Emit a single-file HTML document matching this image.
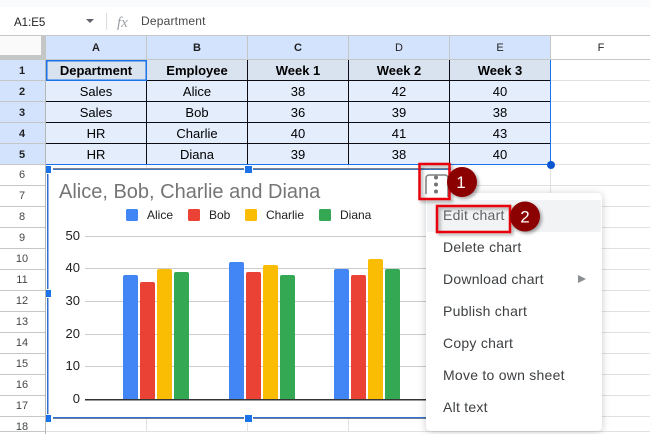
<!DOCTYPE html>
<html><head><meta charset="utf-8"><style>
html,body{margin:0;padding:0;background:#fff;width:650px;height:434px;overflow:hidden}
svg{display:block;font-family:"Liberation Sans",sans-serif}
</style></head><body>
<svg width="650" height="434" viewBox="0 0 650 434" xmlns="http://www.w3.org/2000/svg">
<defs>
<filter id="s" x="-20%" y="-20%" width="140%" height="140%"><feDropShadow dx="0" dy="1" stdDeviation="4" flood-color="#000" flood-opacity=".22"/></filter>
<filter id="r" x="-20%" y="-20%" width="150%" height="150%"><feDropShadow dx="2" dy="2" stdDeviation="1.5" flood-color="#000" flood-opacity=".35"/></filter>
</defs>
<rect width="650" height="7" fill="#f9fbfd"/>
<text x="14" y="26" font-size="11.5" fill="#202124">A1:E5</text>
<path d="M86 19h8l-4 4z" fill="#5f6368"/>
<rect x="106" y="13" width="1" height="17" fill="#dadce0"/>
<text x="117" y="27" font-size="15" font-style="italic" fill="#9aa0a6" font-family="Liberation Serif">fx</text>
<text x="141" y="25" font-size="12" fill="#444746" letter-spacing=".2">Department</text>

<!-- header backgrounds -->
<rect x="0" y="35" width="650" height="1" fill="#c4c7c5"/>
<rect x="0" y="36" width="46" height="24" fill="#c4c7c5"/>
<rect x="0" y="36" width="41" height="19" fill="#fafafa"/>
<rect x="46" y="36" width="504" height="23" fill="#d3e3fd"/>
<rect x="0" y="60" width="45" height="105" fill="#d3e3fd"/>
<rect x="0" y="59" width="650" height="1" fill="#c4c7c5"/>
<rect x="45" y="60" width="1" height="374" fill="#b4b7b5"/>
<g fill="#c4c7c5"><rect x="146" y="36" width="1" height="23"/><rect x="247" y="36" width="1" height="23"/><rect x="348" y="36" width="1" height="23"/><rect x="449" y="36" width="1" height="23"/><rect x="550" y="36" width="1" height="23"/></g>
<g font-size="11" fill="#1f1f1f" text-anchor="middle">
<g font-weight="bold"><text x="96" y="51">A</text><text x="197" y="51">B</text><text x="298" y="51">C</text></g>
<text x="399" y="51">D</text><text x="500" y="51">E</text><text x="601" y="51">F</text>
</g>
<!-- row lines -->
<g fill="#e1e1e1">
<rect x="551" y="80" width="99" height="1"/><rect x="551" y="101" width="99" height="1"/><rect x="551" y="122" width="99" height="1"/><rect x="551" y="143" width="99" height="1"/><rect x="551" y="164" width="99" height="1"/>
<rect x="46" y="185" width="604" height="1"/><rect x="46" y="206" width="604" height="1"/><rect x="46" y="227" width="604" height="1"/><rect x="46" y="248" width="604" height="1"/><rect x="46" y="269" width="604" height="1"/><rect x="46" y="290" width="604" height="1"/><rect x="46" y="311" width="604" height="1"/><rect x="46" y="332" width="604" height="1"/><rect x="46" y="353" width="604" height="1"/><rect x="46" y="374" width="604" height="1"/><rect x="46" y="395" width="604" height="1"/><rect x="46" y="416" width="604" height="1"/><rect x="46" y="431" width="604" height="1"/>
<rect x="146" y="165" width="1" height="266"/><rect x="247" y="165" width="1" height="266"/><rect x="348" y="165" width="1" height="266"/><rect x="449" y="165" width="1" height="266"/><rect x="550" y="165" width="1" height="266"/>
</g>
<g fill="#c4c7c5"><rect x="0" y="80" width="45" height="1"/><rect x="0" y="101" width="45" height="1"/><rect x="0" y="122" width="45" height="1"/><rect x="0" y="143" width="45" height="1"/><rect x="0" y="164" width="45" height="1"/><rect x="0" y="185" width="45" height="1"/><rect x="0" y="206" width="45" height="1"/><rect x="0" y="227" width="45" height="1"/><rect x="0" y="248" width="45" height="1"/><rect x="0" y="269" width="45" height="1"/><rect x="0" y="290" width="45" height="1"/><rect x="0" y="311" width="45" height="1"/><rect x="0" y="332" width="45" height="1"/><rect x="0" y="353" width="45" height="1"/><rect x="0" y="374" width="45" height="1"/><rect x="0" y="395" width="45" height="1"/><rect x="0" y="416" width="45" height="1"/><rect x="0" y="431" width="45" height="1"/></g>
<g font-size="11" fill="#444746" text-anchor="middle">
<g font-weight="bold" fill="#1f1f1f"><text x="22" y="74">1</text><text x="22" y="95">2</text><text x="22" y="116">3</text><text x="22" y="137">4</text><text x="22" y="158">5</text></g>
<text x="22" y="178">6</text><text x="22" y="199">7</text><text x="22" y="220">8</text><text x="22" y="241">9</text><text x="22" y="262">10</text><text x="22" y="283">11</text><text x="22" y="304">12</text><text x="22" y="325">13</text><text x="22" y="346">14</text><text x="22" y="367">15</text><text x="22" y="388">16</text><text x="22" y="409">17</text><text x="22" y="430">18</text>
</g>
<!-- table -->
<rect x="46" y="60" width="504" height="20" fill="#d9e2ef"/>
<rect x="46" y="81" width="504" height="83" fill="#e3edfc"/>
<g fill="#0c0c14"><rect x="46" y="80" width="504" height="1"/><rect x="46" y="101" width="504" height="1"/><rect x="46" y="122" width="504" height="1"/><rect x="46" y="143" width="504" height="1"/>
<rect x="146" y="60" width="1" height="104"/><rect x="247" y="60" width="1" height="104"/><rect x="348" y="60" width="1" height="104"/><rect x="449" y="60" width="1" height="104"/></g>
<rect x="46" y="164" width="505" height="1" fill="#1a73e8"/>
<rect x="550" y="60" width="1" height="105" fill="#1a73e8"/>
<rect x="46.75" y="60.75" width="99.5" height="19.5" fill="none" stroke="#1a73e8" stroke-width="1.5"/>
<circle cx="551" cy="165" r="4" fill="#0b57d0"/>
<g font-size="13" fill="#000" text-anchor="middle">
<g font-weight="bold"><text x="96" y="75">Department</text><text x="197" y="75">Employee</text><text x="298" y="75">Week 1</text><text x="399" y="75">Week 2</text><text x="500" y="75">Week 3</text></g>
<text x="96" y="96">Sales</text><text x="197" y="96">Alice</text><text x="298" y="96">38</text><text x="399" y="96">42</text><text x="500" y="96">40</text>
<text x="96" y="117">Sales</text><text x="197" y="117">Bob</text><text x="298" y="117">36</text><text x="399" y="117">39</text><text x="500" y="117">38</text>
<text x="96" y="138">HR</text><text x="197" y="138">Charlie</text><text x="298" y="138">40</text><text x="399" y="138">41</text><text x="500" y="138">43</text>
<text x="96" y="159">HR</text><text x="197" y="159">Diana</text><text x="298" y="159">39</text><text x="399" y="159">38</text><text x="500" y="159">40</text>
</g>
<!-- chart -->
<rect x="46" y="168" width="405" height="250" fill="#fff"/>
<rect x="47" y="168" width="404" height="1" fill="#7f858f"/>
<rect x="47" y="169" width="404" height="1" fill="#3f78c8"/>
<rect x="47" y="417" width="404" height="1" fill="#2f72d0"/>
<rect x="47" y="418" width="404" height="1" fill="#6f7f98"/>
<rect x="47" y="168" width="1.5" height="250" fill="#2f72d0"/>
<g fill="#fff"><rect x="46" y="165" width="7" height="9"/><rect x="244" y="165" width="9" height="9"/><rect x="46" y="289" width="7" height="9"/><rect x="46" y="414" width="7" height="9"/><rect x="244" y="414" width="9" height="9"/></g>
<g fill="#1a73e8"><rect x="46" y="166" width="5" height="7"/><rect x="245" y="166" width="7" height="7"/><rect x="46" y="290" width="5" height="7"/><rect x="46" y="415" width="5" height="7"/><rect x="245" y="415" width="7" height="7"/></g>
<text x="59" y="198" font-size="20" fill="#757575">Alice, Bob, Charlie and Diana</text>
<g font-size="12" fill="#222">
<rect x="126" y="209" width="12" height="12" rx="1.5" fill="#4285f4"/><text x="147" y="219">Alice</text>
<rect x="188" y="209" width="12" height="12" rx="1.5" fill="#ea4335"/><text x="209" y="219">Bob</text>
<rect x="245" y="209" width="12" height="12" rx="1.5" fill="#fbbc04"/><text x="266" y="219">Charlie</text>
<rect x="319" y="209" width="12" height="12" rx="1.5" fill="#34a853"/><text x="340" y="219">Diana</text>
</g>
<g font-size="13" fill="#222" text-anchor="end">
<text x="80" y="240">50</text><text x="80" y="272">40</text><text x="80" y="305">30</text><text x="80" y="338">20</text><text x="80" y="370">10</text><text x="80" y="403">0</text>
</g>
<g fill="#cccccc"><rect x="85" y="236" width="345" height="1"/><rect x="85" y="268" width="345" height="1"/><rect x="85" y="301" width="345" height="1"/><rect x="85" y="334" width="345" height="1"/><rect x="85" y="366" width="345" height="1"/></g>
<g>
<path d="M123 399V277a2 2 0 0 1 2-2h11a2 2 0 0 1 2 2v122z" fill="#4285f4"/>
<path d="M140 399V284a2 2 0 0 1 2-2h11a2 2 0 0 1 2 2v115z" fill="#ea4335"/>
<path d="M157 399V271a2 2 0 0 1 2-2h11a2 2 0 0 1 2 2v128z" fill="#fbbc04"/>
<path d="M174 399V274a2 2 0 0 1 2-2h11a2 2 0 0 1 2 2v125z" fill="#34a853"/>
<path d="M229 399V264a2 2 0 0 1 2-2h11a2 2 0 0 1 2 2v135z" fill="#4285f4"/>
<path d="M246 399V274a2 2 0 0 1 2-2h11a2 2 0 0 1 2 2v125z" fill="#ea4335"/>
<path d="M263 399V267a2 2 0 0 1 2-2h11a2 2 0 0 1 2 2v132z" fill="#fbbc04"/>
<path d="M280 399V277a2 2 0 0 1 2-2h11a2 2 0 0 1 2 2v122z" fill="#34a853"/>
<path d="M334 399V271a2 2 0 0 1 2-2h11a2 2 0 0 1 2 2v128z" fill="#4285f4"/>
<path d="M351 399V277a2 2 0 0 1 2-2h11a2 2 0 0 1 2 2v122z" fill="#ea4335"/>
<path d="M368 399V261a2 2 0 0 1 2-2h11a2 2 0 0 1 2 2v138z" fill="#fbbc04"/>
<path d="M385 399V271a2 2 0 0 1 2-2h11a2 2 0 0 1 2 2v128z" fill="#34a853"/>
</g>
<rect x="85" y="399" width="345" height="1.5" fill="#333"/>
<!-- menu -->
<rect x="426" y="193" width="176" height="238" rx="5" fill="#fff" filter="url(#s)"/>
<rect x="427" y="200" width="174" height="32" fill="#f1f3f4"/>
<g font-size="14" fill="#3c4043" letter-spacing=".25">
<text x="443" y="220" fill="#5f6368">Edit chart</text>
<text x="443" y="252">Delete chart</text>
<text x="443" y="284">Download chart</text>
<text x="443" y="316">Publish chart</text>
<text x="443" y="348">Copy chart</text>
<text x="443" y="380">Move to own sheet</text>
<text x="443" y="412">Alt text</text>
</g>
<path d="M578 275l8 4-8 4z" fill="#8a8d91"/>
<!-- kebab -->
<path d="M426 194V178a3 3 0 0 1 3-3h16a3 3 0 0 1 3 3v19" fill="#fff" stroke="#7f7f7f" stroke-width="1.5"/>
<g fill="#757575"><circle cx="436" cy="177.5" r="2"/><circle cx="436" cy="184.5" r="2"/><circle cx="436" cy="191.5" r="2"/></g>
<!-- annotations -->
<rect x="419.5" y="164" width="30" height="35" fill="none" stroke="#e8000b" stroke-width="2.5" filter="url(#r)"/>
<rect x="437" y="206" width="73" height="26" fill="none" stroke="#e8000b" stroke-width="2.5" filter="url(#r)"/>
<circle cx="462" cy="182" r="15" fill="#8b0000" filter="url(#r)"/>
<circle cx="525" cy="216.5" r="15" fill="#8b0000" filter="url(#r)"/>
<text x="461" y="188" font-size="17" fill="#fff" text-anchor="middle">1</text>
<text x="525" y="222.5" font-size="17" fill="#fff" text-anchor="middle">2</text>
</svg>
</body></html>
